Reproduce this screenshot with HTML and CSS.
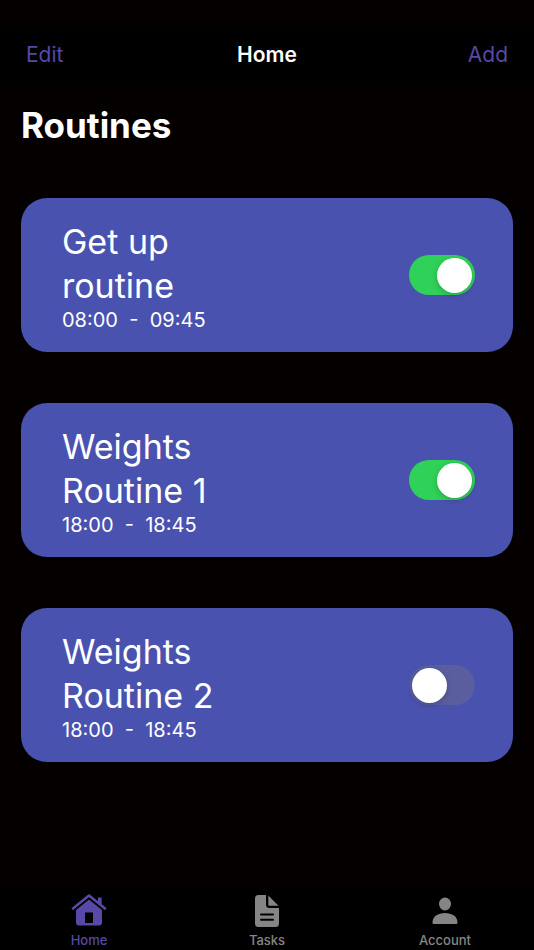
FILE: index.html
```html
<!DOCTYPE html>
<html lang="en">
<head>
<meta charset="utf-8">
<meta name="viewport" content="width=device-width, initial-scale=1">
<title>Home</title>
<link rel="stylesheet" href="styles.css">
</head>
<body>
<header class="navbar">
  <button class="nav-action" type="button">Edit</button>
  <div class="nav-title">Home</div>
  <button class="nav-action nav-action-end" type="button">Add</button>
</header>
<main class="content">
  <h1 class="heading">Routines</h1>
  <ul class="routines">
    <li class="card">
      <div class="card-text">
        <label class="card-title" for="routine-1">Get up routine</label>
        <p class="card-time">08:00&nbsp; -&nbsp; 09:45</p>
      </div>
      <input class="switch" id="routine-1" type="checkbox" role="switch" checked>
    </li>
    <li class="card">
      <div class="card-text">
        <label class="card-title" for="routine-2">Weights Routine 1</label>
        <p class="card-time">18:00&nbsp; -&nbsp; 18:45</p>
      </div>
      <input class="switch" id="routine-2" type="checkbox" role="switch" checked>
    </li>
    <li class="card">
      <div class="card-text">
        <label class="card-title" for="routine-3">Weights Routine 2</label>
        <p class="card-time">18:00&nbsp; -&nbsp; 18:45</p>
      </div>
      <input class="switch" id="routine-3" type="checkbox" role="switch">
    </li>
  </ul>
</main>
<nav class="tabbar">
  <a class="tab tab-active" href="#home">
    <svg class="tab-icon" viewBox="0 0 36 36" aria-hidden="true">
      <path d="M2 17.500 18 4.500 34 17.500" fill="none" stroke="currentColor" stroke-width="2.600" stroke-linecap="round" stroke-linejoin="round"/>
      <path d="M27 6.500h3.600v8l-3.600-3z" fill="currentColor"/>
      <path fill-rule="evenodd" d="M18 8.500 31 19v12.500a3 3 0 0 1-3 3H8a3 3 0 0 1-3-3V19zM14 21.500v10.500h8V21.500z" fill="currentColor"/>
    </svg>
    <span>Home</span>
  </a>
  <a class="tab" href="#tasks">
    <svg class="tab-icon" viewBox="0 0 36 36" aria-hidden="true">
      <path d="M9.500 4H17v9.500a3.500 3.500 0 0 0 3.500 3.500H30v15.500a3.500 3.500 0 0 1-3.500 3.500h-17A3.500 3.500 0 0 1 6 32.500v-25A3.500 3.500 0 0 1 9.500 4z" fill="currentColor"/>
      <path d="M19.300 4.500 29.500 14.800h-9a1.200 1.200 0 0 1-1.200-1.200z" fill="currentColor"/>
      <path d="M12 23.500h12M12 28.700h12" stroke="#000" stroke-width="2" stroke-linecap="round"/>
    </svg>
    <span>Tasks</span>
  </a>
  <a class="tab" href="#account">
    <svg class="tab-icon" viewBox="0 0 36 36" aria-hidden="true">
      <ellipse cx="18" cy="13" rx="6" ry="6.500" fill="currentColor"/>
      <path d="M5.500 31.500C5.500 25.500 11 22 18 22s12.500 3.500 12.500 9.500c0 1-.7 1.500-1.700 1.500H7.200c-1 0-1.700-.5-1.700-1.500z" fill="currentColor"/>
    </svg>
    <span>Account</span>
  </a>
</nav>
</body>
</html>
```
FILE: styles.css
```css
* {
  box-sizing: border-box;
}

body {
  margin: 0;
  min-height: 100vh;
  display: flex;
  flex-direction: column;
  background: #040000;
  color: #fff;
  font-family: Inter, "Liberation Sans", sans-serif;
}

.navbar {
  display: grid;
  grid-template-columns: 1fr auto 1fr;
  align-items: center;
  height: 56px;
  margin-top: 27px;
  padding: 0 26px;
  background: #000;
}

.nav-action {
  justify-self: start;
  padding: 0;
  border: 0;
  background: none;
  color: #5749a5;
  font: 400 21px/28px Inter, "Liberation Sans", sans-serif;
}

.nav-action-end {
  justify-self: end;
}

.nav-title {
  font-size: 21px;
  font-weight: 600;
  line-height: 28px;
}

.content {
  flex: 1;
  padding: 20px 21px;
}

.heading {
  margin: 0 0 51px;
  font-size: 35px;
  font-weight: 700;
  line-height: 44px;
}

.routines {
  display: flex;
  flex-direction: column;
  gap: 51px;
  margin: 0;
  padding: 0;
  list-style: none;
}

.card {
  display: flex;
  align-items: center;
  justify-content: space-between;
  padding: 20px 38px 20px 41px;
  border-radius: 26px;
  background: #4a52af;
}

.card-text {
  width: 170px;
  padding-top: 2px;
}

.card-title {
  display: block;
  font-size: 34px;
  font-weight: 400;
  line-height: 44px;
}

.card-time {
  margin: 0;
  font-size: 20px;
  font-weight: 400;
  line-height: 24px;
}

.switch {
  appearance: none;
  display: flex;
  flex: none;
  width: 66px;
  height: 40px;
  margin: 0;
  padding: 3px;
  border-radius: 20px;
  background: #5a5e9f;
}

.switch::before {
  content: "";
  width: 35px;
  height: 35px;
  border-radius: 50%;
  background: #fff;
  box-shadow: 0 2px 6px rgba(0, 0, 0, 0.2);
}

.switch:checked {
  justify-content: flex-end;
  background: #30d158;
}

.tabbar {
  display: grid;
  grid-template-columns: repeat(3, 1fr);
  height: 64px;
  padding-top: 5px;
  background: #000;
}

.tab {
  display: flex;
  flex-direction: column;
  align-items: center;
  gap: 5px;
  color: #858585;
  font-size: 13px;
  font-weight: 500;
  line-height: 16px;
  text-decoration: none;
}

.tab-active {
  color: #5749a5;
}

.tab-icon {
  width: 36px;
  height: 36px;
}
```
